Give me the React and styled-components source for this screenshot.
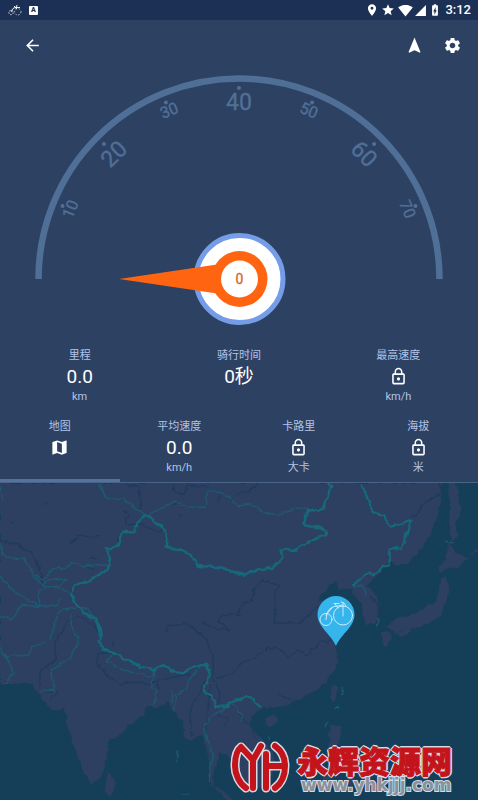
import { useState } from 'react';
import styled, { createGlobalStyle } from 'styled-components';
import {
	MdArrowBack,
	MdBatteryChargingFull,
	MdLocationOn,
	MdLockOutline,
	MdMap,
	MdNavigation,
	MdSettings,
	MdSignalCellular4Bar,
	MdSignalWifi4Bar,
	MdStar,
} from 'react-icons/md';

const GlobalStyle = createGlobalStyle`
	* {
		box-sizing: border-box;
	}
	body {
		margin: 0;
		background: #2d4163;
		font-family: Roboto, 'Noto Sans CJK SC', sans-serif;
	}
`;

const Page = styled.div`
	display: flex;
	flex-direction: column;
	min-height: 100vh;
	background: #2d4163;
	color: #ffffff;
`;

const StatusBar = styled.div`
	display: flex;
	align-items: center;
	justify-content: space-between;
	height: 20px;
	padding: 0 7px 0 8px;
	background: #1c2f54;
`;

const StatusGroup = styled.div`
	display: flex;
	align-items: center;
	gap: ${({ $gap }) => $gap}px;
`;

const Clock = styled.span`
	font-size: 13px;
	font-weight: 500;
	line-height: 20px;
`;

const KeyboardBadge = styled.span`
	width: 9px;
	height: 9px;
	border-radius: 1px;
	background: #ffffff;
	color: #1c2f54;
	font-size: 7px;
	font-weight: 900;
	line-height: 9px;
	text-align: center;
`;

const Toolbar = styled.header`
	display: flex;
	align-items: center;
	justify-content: space-between;
	height: 50px;
	padding: 0 10px 0 16px;
`;

const Actions = styled.div`
	display: flex;
	gap: 6px;
`;

const IconButton = styled.button`
	display: flex;
	align-items: center;
	justify-content: center;
	width: 32px;
	height: 32px;
	padding: 0;
	border: 0;
	background: none;
	color: #ffffff;
`;

const Gauge = styled.svg`
	display: block;
	width: 100%;
	font-family: Roboto, sans-serif;
`;

const StatsRow = styled.div`
	display: grid;
	grid-template-columns: repeat(3, 1fr);
	padding: 18px 0 14px;
`;

const Tabs = styled.div`
	display: grid;
	grid-template-columns: repeat(4, 1fr);
	border-bottom: 1px solid #4a6489;
`;

const Cell = styled.div`
	display: flex;
	flex-direction: column;
	align-items: center;
	color: #b3c4e6;
	font-size: 11px;
	line-height: 16px;
`;

const TabButton = styled.button`
	height: 63px;
	padding: 0 0 3px;
	border: 0;
	border-bottom: 3px solid ${({ $active }) => ($active ? '#56739c' : 'transparent')};
	background: none;
	font-family: inherit;
`;

const Value = styled.span`
	display: flex;
	align-items: center;
	height: 25px;
	color: #ffffff;
	font-size: 19px;
	line-height: 25px;
`;

const Unit = styled.span`
	height: 16px;
`;

const MapArea = styled.div`
	position: relative;
	display: flex;
	flex: 1;
	min-height: 317px;
	background: #153f59;
`;

const MapSvg = styled.svg`
	position: absolute;
	inset: 0;
	width: 100%;
	height: 100%;
`;

const Watermark = styled.div`
	position: absolute;
	right: 26px;
	bottom: 7px;
	display: flex;
	align-items: center;
	gap: 8px;
`;

const WatermarkText = styled.div`
	display: flex;
	flex-direction: column;
`;

const SiteName = styled.span`
	color: #c4141b;
	font-family: 'Noto Sans CJK SC', sans-serif;
	font-size: 31px;
	font-weight: 900;
	line-height: 34px;
	-webkit-text-stroke: 1px #c4141b;
	text-shadow:
		-1px -1px 0 #d9dbe4,
		1px -1px 0 #d9dbe4,
		-1px 1px 0 #d9dbe4,
		1px 1px 0 #d9dbe4,
		-2px 0 0 #d9dbe4,
		2px 0 0 #d9dbe4,
		0 -2px 0 #d9dbe4,
		0 2px 0 #d9dbe4;
`;

const SiteUrl = styled.span`
	padding-left: 4px;
	color: #8b9199;
	font-family: 'DejaVu Sans', sans-serif;
	font-size: 17px;
	font-weight: 700;
	line-height: 16px;
	paint-order: stroke fill;
	-webkit-text-stroke: 2px #d9dbe4;
`;

const MARKS = [10, 20, 30, 40, 50, 60, 70];

const SUMMARY = [
	{ label: '里程', value: '0.0', unit: 'km' },
	{ label: '骑行时间', value: '0秒', unit: '' },
	{ label: '最高速度', locked: true, unit: 'km/h' },
];

const TABS = [
	{ label: '地图', icon: true, unit: '' },
	{ label: '平均速度', value: '0.0', unit: 'km/h' },
	{ label: '卡路里', locked: true, unit: '大卡' },
	{ label: '海拔', locked: true, unit: '米' },
];

const LAND = [
	// mainland
	'M0 483H442L441 497 438 515 430 535 418 553 408 563 398 565 390 560 384 568 378 576 371 580 366 586 372 590 377 597 378 606 379 618 374 624 366 625 363 615 362 604 356 597 350 590 342 588 338 590 337 582 331 584 326 590 318 597 319 601 328 603 338 602 348 606 338 612 334 620 330 635 336 645 338 655 336 667 326 682 316 690 301 699 288 705 275 708 263 707 253 715 250 723 256 733 263 739 273 752 275 762 272 776 260 788 250 794 243 787 238 771 230 757 219 752 216 765 212 776 213 785 222 790 236 802 229 802 217 790 210 784 210 765 207 750 203 735 197 738 191 740 185 738 183 723 173 710 168 702 163 705 157 707 145 707 143 715 130 725 117 737 108 740 107 757 104 769 100 778 92 784 83 772 78 757 68 730 65 707 58 711 48 707 40 695 32 684H0Z',
	'M107 773 113 778 116 788 110 796 105 792Z',
	'M265 718 273 715 278 718 275 725 268 726Z',
	'M333 685 338 687 337 695 333 702 329 697Z',
	'M331 725 340 725 341 733 338 745 345 758 340 764 330 753 329 735Z',
	'M348 775 354 777 352 786 346 783Z M330 768 334 771 325 785 323 783Z',
	'M381 632 391 632 392 638 388 647 383 645Z',
	'M397 633 409 628 411 632 401 638Z',
	'M386 628 398 617 411 615 421 610 427 606 434 604 438 597 440 580 445 576 450 587 448 597 443 608 441 617 430 622 420 627 408 629 395 633Z',
	'M448 543 455 552 468 558 458 568 448 567 440 573 438 568 446 560Z',
	'M448 483H456L461 510 455 523 458 537 451 542 450 523 451 507Z',
	'M470 554 478 550 478 552 471 556Z',
];

// each tile is drawn on a grid three times finer than the map
const TILES = [
	{
		x: 0,
		y: 480,
		borders: [
			'M440 105 412 128 405 158 370 155 355 200 320 205 330 235 322 270 270 300 225 315 212 340 232 378 255 400 285 415 300 445 303 480',
			'M440 105 485 140 500 165 498 200 540 208 575 228 595 258 665 262 720 283',
		],
		minor: [
			'M440 105 480 88 520 65 560 80 615 82 622 35 645 30 690 50 700 70 720 82',
			'M295 10 320 55 370 58 410 85 440 105',
			'M0 190 10 230 75 238 100 285 130 300 165 262 205 262 215 248 250 258 320 255',
			'M0 290 50 340 120 380 170 375 180 355',
			'M0 410 35 418 65 375 120 380 115 330 150 320 205 335',
			'M100 290 140 320 175 320 200 298 150 298 130 310',
			'M232 380 180 390 165 430 150 480M0 20 10 60',
			'M210 400 215 440 235 480M225 380 260 385 290 420 305 470',
		],
		rivers: [
			'M0 180 45 190 95 220 120 265 130 310',
			'M215 190 235 168 300 170M210 195 225 172',
			'M380 15 415 20 425 75 410 90',
			'M520 18 525 38 555 42 560 15 595 20 625 20',
			'M375 90 385 110 375 115 385 135 410 130 475 155 490 140',
			'M500 455 500 440 565 430 620 480',
			'M605 425 640 445 690 450 655 420 665 403 720 405',
			'M170 480 205 420 235 408 280 435 300 460',
			'M260 265 285 263M520 75 535 70M535 105 550 107M132 72 142 70M36 126 42 130M658 50 655 65M352 175 355 190M270 235H288',
		],
	},
	{
		x: 238,
		y: 480,
		borders: [
			'M0 278 25 282 60 268 105 262 135 235 128 212 145 208 165 213 205 188 265 165 262 150 240 138 220 140 197 135 210 90 235 92 260 80 270 40 283 20 272 5',
			'M370 10 395 70 400 95 435 105 455 140 480 135 520 122 490 205 455 205 455 255 430 265 410 285 390 280 375 290 345 318',
		],
		minor: ['M0 78 35 72 80 98 120 105 165 88 210 85', 'M345 318 375 318 385 345', 'M620 188H650'],
		rivers: [
			'M0 400 15 375 45 355 50 325 70 300 125 315 110 350 110 430 185 428 240 380',
			'M0 40 30 35 60 10',
			'M520 115 545 95 550 75 615 35 600 10',
			'M395 345 415 370 425 400',
		],
	},
	{
		x: 0,
		y: 640,
		borders: [
			'M295 0 310 30 340 38 380 60 420 80 465 88 490 75 520 95 550 100 585 78 620 75 632 110 612 135 612 155 635 170 650 200 680 200 690 185 720 180',
		],
		minor: [
			'M235 0 205 60 150 95 165 150 120 155',
			'M0 40 15 50 90 45 95 20 140 8M0 20 35 85 40 100 20 130',
			'M340 40 320 60 365 90 460 110 465 88',
			'M460 90 455 145 470 150 465 195M505 150 520 165 515 190M600 80 565 120 560 150 530 165 525 210',
			'M680 200 640 225 610 260 620 300 640 345 625 420M700 190 720 220',
			'M535 330 530 370M545 465H570',
		],
		rivers: [
			'M165 0 165 60 120 95 120 150',
			'M340 40 295 40 290 70 320 105 360 132 400 125 450 132 480 120 540 108 570 100',
			'M620 0 640 60 640 120 660 160 655 190',
			'M610 120 605 150 570 205 575 290',
			'M720 70 700 100 650 115M630 130 625 200 615 280',
			'M650 230 685 230 675 260M340 0V20M475 110V150M130 155 175 155 150 180',
		],
	},
	{
		x: 238,
		y: 590,
		borders: ['M0 330 25 318 45 325 55 345 70 352'],
		minor: ['M315 290 310 315M302 345 288 360M272 395 260 412M90 440 98 450M415 110 422 85M0 365 15 375 10 395'],
		rivers: [
			'M0 222 55 200 90 172 125 178 155 205 180 178 205 198 245 155 280 150',
			'M120 315 150 325 165 340M180 345 210 360M330 272 345 268M400 260 410 250',
			'M0 370 40 410 55 450',
		],
	},
];

const point = (radius, angle) => {
	const rad = (angle * Math.PI) / 180;
	return [239 + radius * Math.sin(rad), 209 - radius * Math.cos(rad)];
};

const SpeedGauge = () => (
	<Gauge viewBox="0 0 478 260" role="img" aria-label="0 km/h">
		<path d="M38.500 209a200.500 200.500 0 0 1 401 0" fill="none" stroke="#506f97" strokeWidth="6.500" />
		{MARKS.map((mark) => {
			const angle = (mark - 40) * 2.25;
			const big = mark % 20 === 0;
			const [dotX, dotY] = point(191, angle);
			const [x, y] = point(big ? 177 : 182, angle);
			return (
				<g key={mark} fill="#506f97">
					<circle cx={dotX} cy={dotY} r="2" />
					<text
						x={x}
						y={y}
						dy={big ? 8 : 5}
						fontSize={big ? 23 : 16}
						stroke="#506f97"
						strokeWidth="0.400"
						textAnchor="middle"
						transform={`rotate(${angle} ${x} ${y})`}
					>
						{mark}
					</text>
				</g>
			);
		})}
		<circle cx="239.500" cy="209" r="43.500" fill="#ffffff" stroke="#759ce6" strokeWidth="5" />
		<path d="M119 209 217 194.500V223.500Z" fill="#ff6410" />
		<circle cx="239.500" cy="209" r="28" fill="#ff6410" />
		<circle cx="239.500" cy="209" r="18.500" fill="#ffffff" />
		<text x="239.500" y="214" fontSize="14" fill="#d9622b" stroke="#d9622b" strokeWidth="0.300" textAnchor="middle">
			0
		</text>
	</Gauge>
);

const CyclingIcon = () => (
	<svg width="14" height="12" viewBox="0 0 14 12" fill="none" stroke="#ffffff" aria-hidden="true">
		<circle cx="3" cy="8.500" r="2.200" strokeWidth=".8" strokeDasharray="1.500 1" />
		<circle cx="9.800" cy="7.800" r="3.200" strokeWidth=".7" strokeDasharray="1.500 1.600" />
		<path d="M3 8 5 4.500 8 3M6 2 9 5M9 1 8 5M7 3.500h5" strokeWidth=".9" />
	</svg>
);

const RegionMap = () => (
	<MapSvg viewBox="0 483 478 317" preserveAspectRatio="xMidYMid slice" role="img" aria-label="地图">
		<defs>
			<filter id="rough" x="0" y="0" width="100%" height="100%" colorInterpolationFilters="sRGB">
				<feTurbulence type="fractalNoise" baseFrequency="0.15" numOctaves="2" seed="4" />
				<feDisplacementMap in="SourceGraphic" scale="5" xChannelSelector="R" yChannelSelector="G" />
			</filter>
		</defs>
		<g filter="url(#rough)">
			<rect x="-10" y="470" width="500" height="340" fill="#153f59" />
			{LAND.map((d) => (
				<path key={d} d={d} fill="#2d4062" />
			))}
			{TILES.map(({ x, y, borders, minor, rivers }) => (
				<g
					key={`${x}-${y}`}
					transform={`translate(${x} ${y}) scale(${1 / 3})`}
					fill="none"
					strokeLinejoin="round"
				>
					<path d={rivers.join('')} stroke="#1f3a5c" strokeWidth="4" />
					<path d={minor.join('')} stroke="#1d5a72" strokeWidth="4" />
					<path d={borders.join('')} stroke="#15697b" strokeWidth="7" />
				</g>
			))}
		</g>
		<path
			d="M336 646C331 634 317.500 627 317.500 614.500a18.500 18.500 0 0 1 37 0C354.500 627 341 634 336 646Z"
			fill="#36b4ec"
		/>
		<g fill="none" stroke="#d8f3ff" strokeWidth=".9" strokeLinecap="round">
			<circle cx="326" cy="619.500" r="6" />
			<circle cx="343" cy="615.500" r="9.500" />
			<path d="M326 619.500 327 613Q330 606 338 606L342 605M343 616V603M341 602 344 603 346 606M334 603.500H339M335 604 338 608M326 615 332 608" />
		</g>
	</MapSvg>
);

const SiteLogo = () => {
	const strokes =
		'M10 5C5 9 4 16 4 24S8 41 15 46M10 5 22 18 30 4M22 18V46M35 12V46M35 24H54M44 4C51 9 54 16 54 24S51 41 44 46';
	return (
		<svg width="58" height="51" viewBox="0 0 58 51" fill="none" overflow="visible" strokeLinejoin="round" aria-hidden="true">
			<path d={strokes} stroke="#d9dbe4" strokeWidth="9" strokeLinecap="round" />
			<path d={strokes} stroke="#c4141b" strokeWidth="6" strokeLinecap="round" />
		</svg>
	);
};

const StatContent = ({ label, value, icon, locked, unit }) => (
	<Cell>
		<span>{label}</span>
		<Value>
			{locked && <MdLockOutline size={19} />}
			{icon && <MdMap size={19} />}
			{value}
		</Value>
		<Unit>{unit}</Unit>
	</Cell>
);

export default function App() {
	const [active, setActive] = useState(0);
	return (
		<Page>
			<GlobalStyle />
			<StatusBar>
				<StatusGroup $gap={7}>
					<CyclingIcon />
					<KeyboardBadge>A</KeyboardBadge>
				</StatusGroup>
				<StatusGroup $gap={3}>
					<StatusGroup $gap={2}>
						<MdLocationOn size={14} />
						<MdStar size={14} />
					</StatusGroup>
					<StatusGroup $gap={1}>
						<MdSignalWifi4Bar size={15} />
						<MdSignalCellular4Bar size={13} />
						<MdBatteryChargingFull size={14} />
					</StatusGroup>
					<Clock>3:12</Clock>
				</StatusGroup>
			</StatusBar>
			<Toolbar>
				<IconButton aria-label="返回">
					<MdArrowBack size={19} />
				</IconButton>
				<Actions>
					<IconButton aria-label="导航">
						<MdNavigation size={19} />
					</IconButton>
					<IconButton aria-label="设置">
						<MdSettings size={19} />
					</IconButton>
				</Actions>
			</Toolbar>
			<SpeedGauge />
			<StatsRow>
				{SUMMARY.map((item) => (
					<StatContent key={item.label} {...item} />
				))}
			</StatsRow>
			<Tabs role="tablist">
				{TABS.map((item, index) => (
					<TabButton
						key={item.label}
						role="tab"
						aria-selected={active === index}
						$active={active === index}
						onClick={() => setActive(index)}
					>
						<StatContent {...item} />
					</TabButton>
				))}
			</Tabs>
			<MapArea>
				<RegionMap />
				<Watermark>
					<SiteLogo />
					<WatermarkText>
						<SiteName>永辉资源网</SiteName>
						<SiteUrl>www.yhkjjj.com</SiteUrl>
					</WatermarkText>
				</Watermark>
			</MapArea>
		</Page>
	);
}
